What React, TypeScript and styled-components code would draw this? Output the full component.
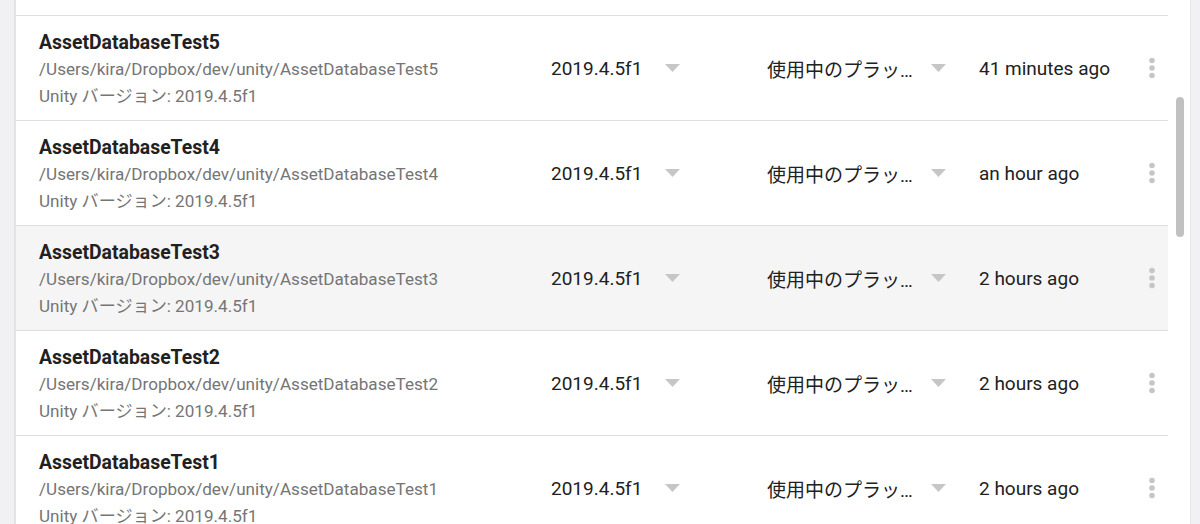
import React from 'react';
import styled, { createGlobalStyle } from 'styled-components';

const GlobalStyle = createGlobalStyle`
  html, body {
    margin: 0;
    padding: 0;
    height: 100%;
    overflow: hidden;
  }
  body {
    font-family: Roboto, "Noto Sans CJK JP", sans-serif;
    background-color: #ffffff;
  }
`;

const Page = styled.div`
  display: flex;
  width: 1200px;
  height: 524px;
  overflow: hidden;
`;

const SideStrip = styled.div`
  width: 14px;
  flex-shrink: 0;
  background-color: #f1f1f3;
  border-right: 2px solid #e4e4e6;
`;

const ListArea = styled.div`
  flex: 1;
  overflow: hidden;
`;

const ProjectList = styled.ul`
  list-style: none;
  margin: -89px 0 0 0;
  padding: 0;
`;

const Row = styled.li<{ $active?: boolean }>`
  height: 104px;
  display: grid;
  grid-template-columns: 512px 216px 212px 1fr 32px;
  align-items: center;
  padding: 0 0 0 23px;
  border-bottom: 1px solid #dedede;
  background-color: ${(p) => (p.$active ? '#f5f5f5' : '#ffffff')};
`;

const Info = styled.div`
  display: flex;
  flex-direction: column;
  padding-top: 3px;
`;

const Title = styled.div`
  font-size: 19.4px;
  font-weight: 700;
  color: #212121;
  line-height: 27px;
  white-space: nowrap;
`;

const SubText = styled.div`
  font-size: 17.1px;
  color: #757575;
  line-height: 27px;
  white-space: nowrap;
`;

const Select = styled.div<{ $width: number }>`
  display: flex;
  align-items: center;
  justify-content: space-between;
  width: ${(p) => p.$width}px;
  font-size: 19px;
  color: #212121;
`;

const SelectText = styled.span`
  white-space: nowrap;
`;

const TimeText = styled.span`
  font-size: 19px;
  color: #212121;
  white-space: nowrap;
`;

const MenuButton = styled.button`
  border: none;
  background: transparent;
  padding: 0;
  display: flex;
  justify-content: center;
  cursor: pointer;
`;

const ScrollTrack = styled.div`
  width: 22px;
  flex-shrink: 0;
  padding-top: 97px;
  display: flex;
  justify-content: center;
`;

const ScrollThumb = styled.div`
  width: 8px;
  height: 140px;
  margin-left: 1px;
  border-radius: 4px;
  background-color: #c1c1c1;
`;

const RightStrip = styled.div`
  width: 9px;
  flex-shrink: 0;
  background-color: #f1f1f3;
  border-left: 1px solid #e6e6e8;
`;

const Caret = () => (
  <svg width="15" height="8" viewBox="0 0 15 8">
    <path d="M0 0 L15 0 L7.5 8 Z" fill="#c6c6c6" />
  </svg>
);

const Kebab = () => (
  <svg width="8" height="22" viewBox="0 0 8 22">
    <circle cx="4" cy="3.5" r="2.8" fill="#c6c6c6" />
    <circle cx="4" cy="11" r="2.8" fill="#c6c6c6" />
    <circle cx="4" cy="18.5" r="2.8" fill="#c6c6c6" />
  </svg>
);

type Project = {
  name: string;
  version: string;
  modified: string;
};

const projects: Project[] = [
  { name: 'AssetDatabaseTest6', version: '2019.4.5f1', modified: '41 minutes ago' },
  { name: 'AssetDatabaseTest5', version: '2019.4.5f1', modified: '41 minutes ago' },
  { name: 'AssetDatabaseTest4', version: '2019.4.5f1', modified: 'an hour ago' },
  { name: 'AssetDatabaseTest3', version: '2019.4.5f1', modified: '2 hours ago' },
  { name: 'AssetDatabaseTest2', version: '2019.4.5f1', modified: '2 hours ago' },
  { name: 'AssetDatabaseTest1', version: '2019.4.5f1', modified: '2 hours ago' },
];

const App: React.FC = () => (
  <>
    <GlobalStyle />
    <Page>
      <SideStrip />
      <ListArea>
        <ProjectList>
          {projects.map((p) => (
            <Row key={p.name} $active={p.name === 'AssetDatabaseTest3'}>
              <Info>
                <Title>{p.name}</Title>
                <SubText>/Users/kira/Dropbox/dev/unity/{p.name}</SubText>
                <SubText>Unity バージョン: {p.version}</SubText>
              </Info>
              <Select $width={129}>
                <SelectText>{p.version}</SelectText>
                <Caret />
              </Select>
              <Select $width={179}>
                <SelectText>使用中のプラッ…</SelectText>
                <Caret />
              </Select>
              <TimeText>{p.modified}</TimeText>
              <MenuButton type="button" aria-label="メニュー">
                <Kebab />
              </MenuButton>
            </Row>
          ))}
        </ProjectList>
      </ListArea>
      <ScrollTrack>
        <ScrollThumb />
      </ScrollTrack>
      <RightStrip />
    </Page>
  </>
);

export default App;
